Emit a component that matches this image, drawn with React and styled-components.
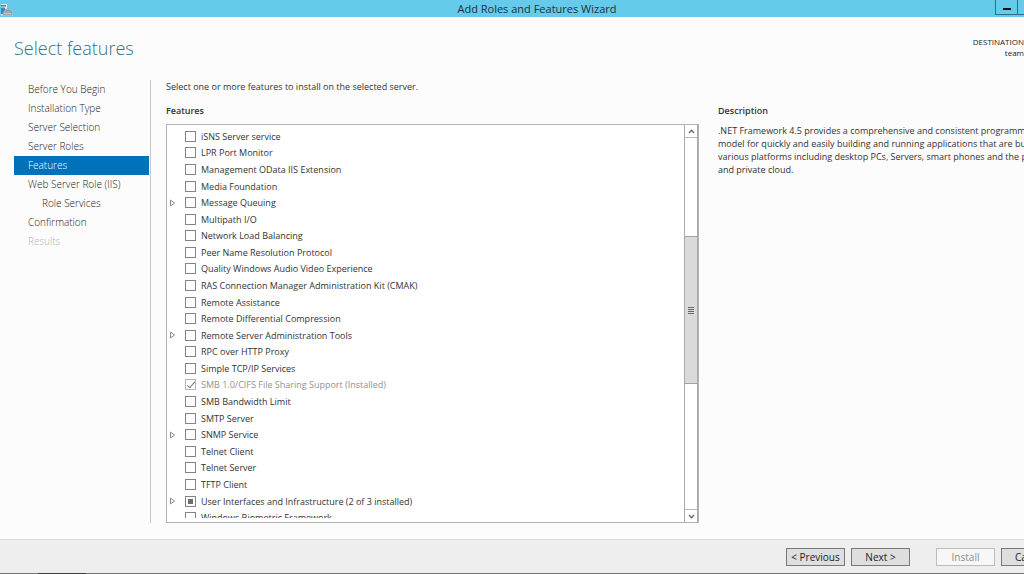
import React, { useEffect, useRef } from "react";
import styled, { createGlobalStyle, css } from "styled-components";

const GlobalStyle = createGlobalStyle`
  * { box-sizing: border-box; }
  body { margin: 0; overflow: hidden; }
  body, button, input { font-family: "Open Sans", "Noto Sans", sans-serif; }
`;

const Window = styled.div`
  min-height: 100vh;
  display: flex;
  flex-direction: column;
  overflow: hidden;
  background: #fcfcfc;
  color: #333;
  font-size: 9px;
  line-height: 13px;
`;

const TitleBar = styled.header`
  display: grid;
  grid-template-columns: 1fr auto 1fr;
  align-items: center;
  height: 17px;
  margin-right: -50px;
  background: #66cbea;
`;

const WindowTitle = styled.span`
  font-size: 11px;
  line-height: 16px;
  color: #17333c;
`;

const AppIcon = styled.svg`
  display: block;
  width: 13px;
  height: 14px;
`;

const WindowControls = styled.div`
  display: flex;
  justify-content: flex-end;
  align-self: start;
  padding-right: 34px;
`;

const ControlButton = styled.button`
  display: flex;
  align-items: center;
  justify-content: center;
  width: 23px;
  height: 15px;
  padding: 0;
  margin-left: -1px;
  border: 1px solid #2f6f86;
  border-top: 0;
  background: transparent;
`;

const PageHeader = styled.div`
  display: flex;
  justify-content: space-between;
  padding: 19px 0 0 14px;
  height: 63px;
`;

const PageTitle = styled.h1`
  margin: 0;
  font-size: 18px;
  line-height: 24px;
  font-weight: 300;
  color: #2f7488;
`;

const Destination = styled.div`
  font-size: 8px;
  line-height: 11px;
  text-align: right;
  color: #222;
`;

const Body = styled.div`
  flex: 1;
  display: flex;
  gap: 15px;
  padding: 0 0 16px 14px;
`;

const Nav = styled.nav`
  flex: none;
  width: 137px;
  padding-right: 1px;
  border-right: 1px solid #c9c9c9;
`;

const NavLink = styled.a`
  display: block;
  padding-left: ${(p) => (p.$nested ? 28 : 14)}px;
  font-size: 10px;
  font-weight: 300;
  line-height: 19px;
  text-decoration: none;
  color: #222;
  ${(p) => p.$active && css`background: #0072bc; color: #fff;`}
  ${(p) => p.$disabled && css`color: #b4b4b4;`}
`;

const Content = styled.main`
  flex: 1;
  min-width: 0;
  display: flex;
  flex-direction: column;
`;

const Intro = styled.p`
  margin: 0;
  white-space: nowrap;
`;

const Columns = styled.div`
  flex: 1;
  display: grid;
  grid-template-columns: minmax(0, 533fr) minmax(0, 306fr);
  gap: 19px;
  padding-top: 11px;
`;

const Column = styled.section`
  display: flex;
  flex-direction: column;
`;

const Heading = styled.h2`
  margin: 0;
  font-size: 9px;
  line-height: 13px;
  font-weight: 600;
`;

const ListBox = styled.div`
  display: flex;
  height: 399px;
  margin-top: 7px;
  border: 1px solid #b4b4b4;
  background: #fff;
`;

const Viewport = styled.div`
  flex: 1;
  padding-top: 3px;
  margin-bottom: 4px;
  overflow: hidden;
`;

const FeatureList = styled.ul`
  display: flex;
  flex-direction: column;
  height: 398px;
  margin: 0;
  padding: 0 0 0 3px;
  list-style: none;
`;

const FeatureRow = styled.li`
  flex: 1 1 0;
  min-height: 0;
  display: flex;
  align-items: center;
`;

const Expander = styled.span`
  display: flex;
  width: 15px;
`;

const FeatureLabel = styled.label`
  display: flex;
  align-items: center;
  gap: 5px;
  white-space: nowrap;
  color: ${(p) => (p.$disabled ? "#929292" : "#333")};
`;

const CheckBox = styled.input.attrs({ type: "checkbox" })`
  appearance: none;
  position: relative;
  width: 11px;
  height: 11px;
  margin: 0;
  border: 1px solid #848484;
  background: #fff;

  &:disabled { border-color: #b5b5b5; }

  &:checked::after {
    content: "";
    position: absolute;
    left: 3px;
    top: 0;
    width: 3px;
    height: 7px;
    border: solid #777;
    border-width: 0 1px 1px 0;
    transform: rotate(40deg);
  }

  &:indeterminate::after {
    content: "";
    position: absolute;
    inset: 2px;
    background: #6d6d6d;
  }
`;

const ScrollBar = styled.div`
  display: flex;
  flex-direction: column;
  width: 14px;
  border: solid #a9a9a9;
  border-width: 0 1px;
`;

const ScrollButton = styled.button`
  display: flex;
  align-items: center;
  justify-content: center;
  flex: none;
  height: 13px;
  padding: 0;
  border: solid #b8b8b8;
  border-width: ${(p) => (p.$down ? "1px 0 0" : "0 0 1px")};
  background: #fff;
`;

const Track = styled.div`
  flex: ${(p) => p.$share} 1 0;
`;

const Thumb = styled.div`
  flex: 146 1 0;
  display: flex;
  align-items: center;
  justify-content: center;
  border: solid #a3a3a3;
  border-width: 1px 0;
  background: #dadada;
`;

const Description = styled.p`
  margin: 7px 0 0;
  white-space: nowrap;
  overflow: hidden;
`;

const Line = styled.span`
  display: block;
`;

const Footer = styled.footer`
  display: flex;
  justify-content: flex-end;
  gap: 6px;
  height: 34px;
  padding-top: 8px;
  margin-right: -36px;
  border-top: 1px solid #dcdcdc;
  background: #eee;
`;

const WizardButton = styled.button`
  width: 59px;
  height: 18px;
  padding: 0;
  margin-left: ${(p) => (p.$apart ? 20 : 0)}px;
  border: 1px solid #777;
  background: #dedede;
  color: #222;
  font-size: 10px;
  line-height: 14px;

  &:disabled {
    border-color: #bdbdbd;
    background: #f7f7f7;
    color: #8c8c8c;
  }
`;

const BottomEdge = styled.div`
  height: 1px;
  padding-left: 38px;
  background: #777;

  &::before {
    content: "";
    display: block;
    width: 48px;
    height: 1px;
    background: #3c3c3c;
  }
`;

const steps = [
  { name: "Before You Begin" },
  { name: "Installation Type" },
  { name: "Server Selection" },
  { name: "Server Roles" },
  { name: "Features", active: true },
  { name: "Web Server Role (IIS)" },
  { name: "Role Services", nested: true },
  { name: "Confirmation" },
  { name: "Results", disabled: true },
];

const features = [
  { name: "iSNS Server service" },
  { name: "LPR Port Monitor" },
  { name: "Management OData IIS Extension" },
  { name: "Media Foundation" },
  { name: "Message Queuing", expandable: true },
  { name: "Multipath I/O" },
  { name: "Network Load Balancing" },
  { name: "Peer Name Resolution Protocol" },
  { name: "Quality Windows Audio Video Experience" },
  { name: "RAS Connection Manager Administration Kit (CMAK)" },
  { name: "Remote Assistance" },
  { name: "Remote Differential Compression" },
  { name: "Remote Server Administration Tools", expandable: true },
  { name: "RPC over HTTP Proxy" },
  { name: "Simple TCP/IP Services" },
  { name: "SMB 1.0/CIFS File Sharing Support (Installed)", installed: true },
  { name: "SMB Bandwidth Limit" },
  { name: "SMTP Server" },
  { name: "SNMP Service", expandable: true },
  { name: "Telnet Client" },
  { name: "Telnet Server" },
  { name: "TFTP Client" },
  { name: "User Interfaces and Infrastructure (2 of 3 installed)", expandable: true, partial: true },
  { name: "Windows Biometric Framework" },
];

function Feature({ name, expandable, installed, partial }) {
  const box = useRef(null);
  useEffect(() => {
    box.current.indeterminate = Boolean(partial);
  }, [partial]);
  return (
    <FeatureRow>
      <Expander>
        {expandable && (
          <svg width="6" height="8" viewBox="0 0 6 8" aria-hidden="true">
            <path d="M0.5 1 L4.5 4 L0.5 7 Z" fill="#fff" stroke="#8c8c8c" strokeWidth="1" />
          </svg>
        )}
      </Expander>
      <FeatureLabel $disabled={installed}>
        <CheckBox ref={box} defaultChecked={installed} disabled={installed} />
        {name}
      </FeatureLabel>
    </FeatureRow>
  );
}

export default function App() {
  return (
    <Window>
      <GlobalStyle />
      <TitleBar>
        <AppIcon viewBox="0 0 13 14" aria-hidden="true">
          <path d="M0.5 2 H7 V6 L12.5 9 V13.5 H1 V2 Z" fill="#e3eef3" />
          <path d="M1 3 H6 V4.5 H1 Z M1 5.5 H5 V12 H1 Z" fill="#3587bd" />
          <path d="M3 9.5 L7.5 6.5 L12 9.5 V13 H3 Z" fill="#b9c5ca" stroke="#77898f" strokeWidth="0.7" />
          <path d="M3 10 H12 M6 8.4 H9.5" stroke="#70828a" strokeWidth="0.8" />
        </AppIcon>
        <WindowTitle>Add Roles and Features Wizard</WindowTitle>
        <WindowControls>
          <ControlButton aria-label="Minimize">
            <svg width="8" height="9" viewBox="0 0 8 9" aria-hidden="true">
              <path d="M0 5 H8 V7 H0 Z" fill="#111" />
            </svg>
          </ControlButton>
          <ControlButton aria-label="Maximize">
            <svg width="10" height="8" viewBox="0 0 10 8" aria-hidden="true">
              <path d="M1 1.5 H9 V7 H1 Z" fill="none" stroke="#111" strokeWidth="2" />
            </svg>
          </ControlButton>
        </WindowControls>
      </TitleBar>

      <PageHeader>
        <PageTitle>Select features</PageTitle>
        <Destination>
          <div>DESTINATION</div>
          <div>team</div>
        </Destination>
      </PageHeader>

      <Body>
        <Nav aria-label="Wizard steps">
          {steps.map((s) => (
            <NavLink
              key={s.name}
              href="#"
              $active={s.active}
              $nested={s.nested}
              $disabled={s.disabled}
              aria-current={s.active ? "step" : undefined}
              aria-disabled={s.disabled}
            >
              {s.name}
            </NavLink>
          ))}
        </Nav>

        <Content>
          <Intro>Select one or more features to install on the selected server.</Intro>
          <Columns>
            <Column>
              <Heading>Features</Heading>
              <ListBox>
                <Viewport>
                  <FeatureList>
                    {features.map((f) => (
                      <Feature key={f.name} {...f} />
                    ))}
                  </FeatureList>
                </Viewport>
                <ScrollBar>
                  <ScrollButton aria-label="Scroll up">
                    <svg width="7" height="5" viewBox="0 0 7 5" aria-hidden="true">
                      <path d="M1 4 L3.5 1.3 L6 4" fill="none" stroke="#666" strokeWidth="1.3" />
                    </svg>
                  </ScrollButton>
                  <Track $share={99} />
                  <Thumb>
                    <svg width="6" height="8" viewBox="0 0 6 8" aria-hidden="true">
                      <path d="M0 1.5 H6 M0 3.5 H6 M0 5.5 H6 M0 7.5 H6" stroke="#666" strokeWidth="1" />
                    </svg>
                  </Thumb>
                  <Track $share={126} />
                  <ScrollButton $down aria-label="Scroll down">
                    <svg width="7" height="5" viewBox="0 0 7 5" aria-hidden="true">
                      <path d="M1 1 L3.5 3.7 L6 1" fill="none" stroke="#666" strokeWidth="1.3" />
                    </svg>
                  </ScrollButton>
                </ScrollBar>
              </ListBox>
            </Column>

            <Column>
              <Heading>Description</Heading>
              <Description>
                <Line>.NET Framework 4.5 provides a comprehensive and consistent programming</Line>
                <Line>model for quickly and easily building and running applications that are built for</Line>
                <Line>various platforms including desktop PCs, Servers, smart phones and the public</Line>
                <Line>and private cloud.</Line>
              </Description>
            </Column>
          </Columns>
        </Content>
      </Body>

      <Footer>
        <WizardButton>&lt; Previous</WizardButton>
        <WizardButton>Next &gt;</WizardButton>
        <WizardButton disabled $apart>Install</WizardButton>
        <WizardButton>Cancel</WizardButton>
      </Footer>
      <BottomEdge />
    </Window>
  );
}
